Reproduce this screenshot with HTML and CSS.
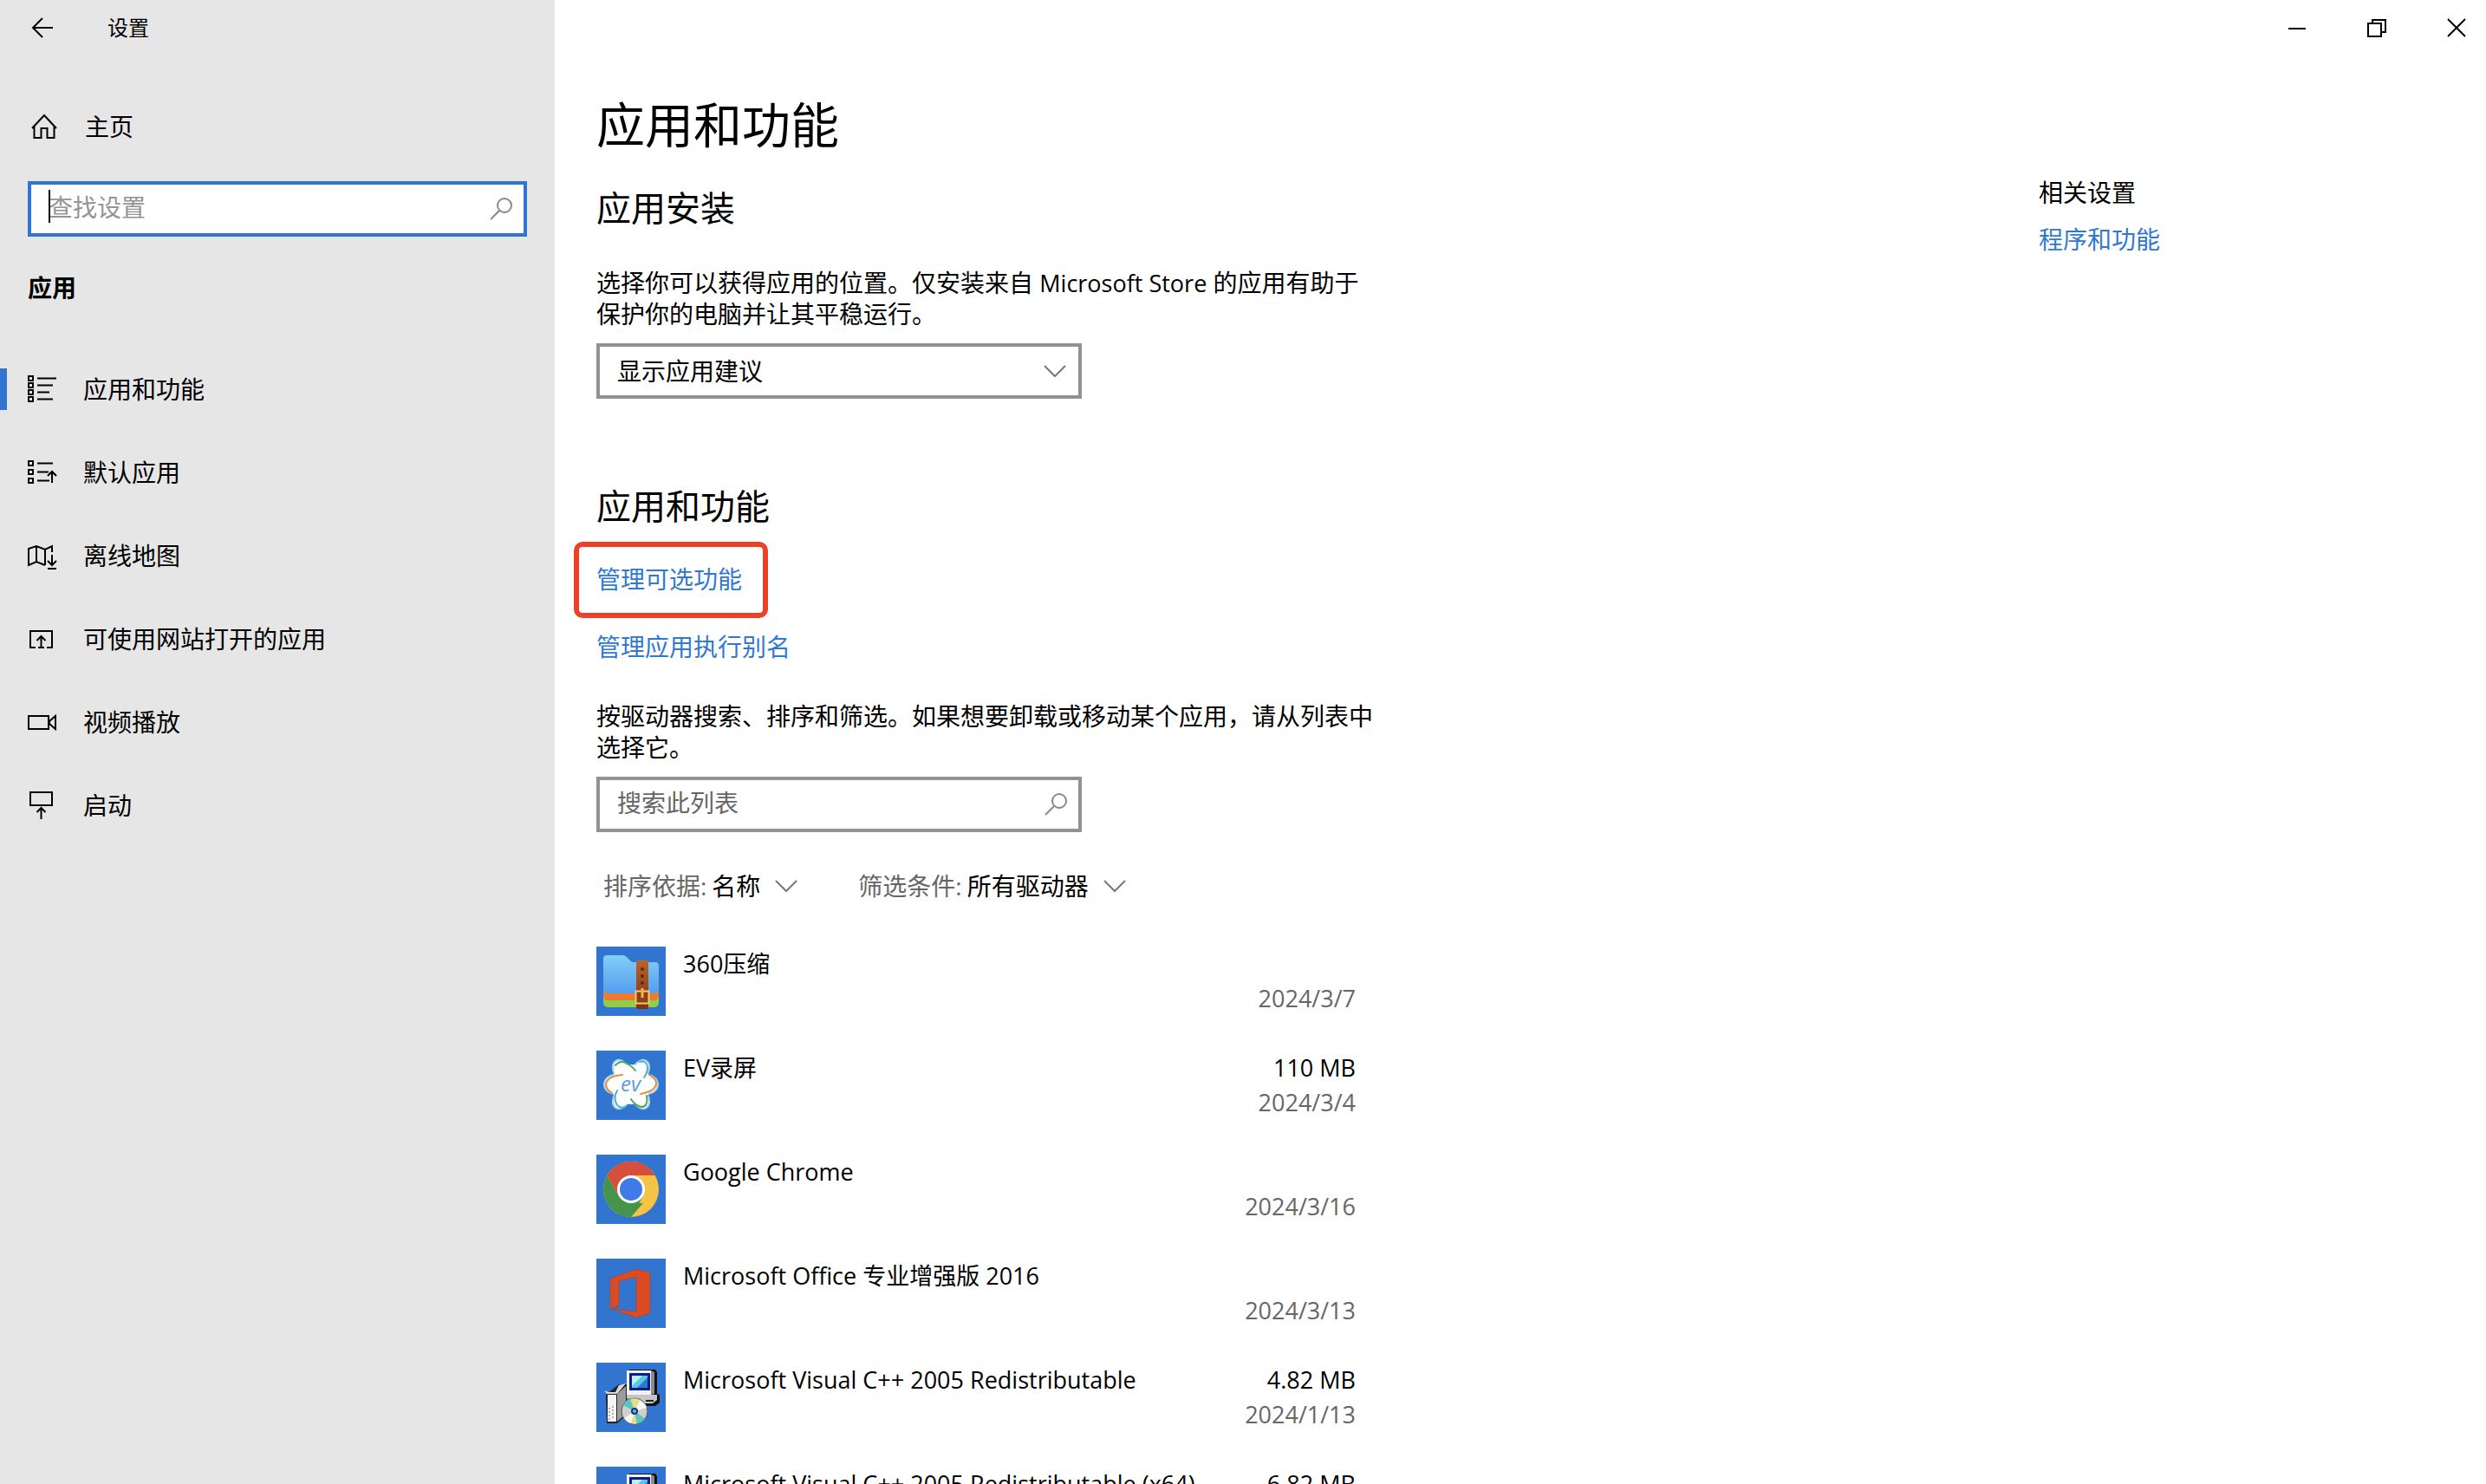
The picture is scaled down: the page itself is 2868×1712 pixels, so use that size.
FILE: index.html
```html
<!DOCTYPE html>
<html lang="zh-CN">
<head>
    <meta charset="UTF-8">
    <meta name="viewport" content="width=device-width, initial-scale=1.0">
    <title>设置</title>
    <link rel="stylesheet" href="styles.css">
</head>
<body>
    <aside class="sidebar">
        <div class="sidebar-top">
            <button class="back-button" type="button" aria-label="返回">
                <svg width="26" height="26" viewBox="0 0 26 26"><path d="M25 13H2M13 2L2 13l11 11"/></svg>
            </button>
            <span class="window-title">设置</span>
        </div>

        <a href="#" class="home-link">
            <svg width="30" height="30" viewBox="0 0 30 30"><path d="M1 17L15 2l14 15M3.500 15v13h8V17h7v11h8V15"/></svg>
            <span>主页</span>
        </a>

        <div class="search-box search-box-focused">
            <input type="text" class="search-input" placeholder="查找设置" aria-label="查找设置">
            <svg class="search-icon" width="28" height="28" viewBox="0 0 28 28"><circle cx="18" cy="10" r="8"/><path d="M12 16L2 26"/></svg>
        </div>

        <h2 class="sidebar-heading">应用</h2>

        <nav class="nav">
            <a href="#" class="nav-item active">
                <svg width="34" height="34" viewBox="0 0 34 34"><path d="M1 2h5v5H1zM1 10h5v5H1zM1 18h5v5H1zM1 26h5v5H1zM11 4.500h22M11 12.500h18M11 20.500h14M11 28.500h18"/></svg>
                <span>应用和功能</span>
            </a>
            <a href="#" class="nav-item">
                <svg width="34" height="34" viewBox="0 0 34 34"><path d="M1 4h5v5H1zM1 14h5v5H1zM1 24h5v5H1zM11 6.500h18M11 16.500h13M11 26.500h14M28 29V16M23 21l5-5 5 5"/></svg>
                <span>默认应用</span>
            </a>
            <a href="#" class="nav-item">
                <svg width="34" height="34" viewBox="0 0 34 34"><path d="M20 28l-10-4-9 4V9l9-3 10 4 8-4v7M10 6v18M20 10v18M28 16v12M23 23l5 5 5-5M23 32h10"/></svg>
                <span>离线地图</span>
            </a>
            <a href="#" class="nav-item">
                <svg width="34" height="34" viewBox="0 0 34 34"><path d="M9 27H3V8h25v19h-6M12 27h7M15.500 27V14M10.500 19l5-5 5 5"/></svg>
                <span>可使用网站打开的应用</span>
            </a>
            <a href="#" class="nav-item">
                <svg width="34" height="34" viewBox="0 0 34 34"><path d="M1 10h23v15H1zM32 10v15l-7-6v-3z"/></svg>
                <span>视频播放</span>
            </a>
            <a href="#" class="nav-item">
                <svg width="34" height="34" viewBox="0 0 34 34"><path d="M3 2h25v15H3zM15.500 33V20M10.500 25l5-5 5 5"/></svg>
                <span>启动</span>
            </a>
        </nav>
    </aside>

    <main class="main">
        <div class="window-controls">
            <button type="button" aria-label="最小化"><svg width="22" height="22" viewBox="0 0 22 22"><path d="M1 12h20"/></svg></button>
            <button type="button" aria-label="还原"><svg width="22" height="22" viewBox="0 0 22 22"><path d="M1 6h15v15H1zM6 6V2h15v14h-5"/></svg></button>
            <button type="button" aria-label="关闭"><svg width="22" height="22" viewBox="0 0 22 22"><path d="M1 1l20 20M21 1L1 21"/></svg></button>
        </div>

        <div class="page">
            <div class="content">
                <h1>应用和功能</h1>

                <section class="install-section">
                    <h2>应用安装</h2>
                    <p class="text"><label for="source">选择你可以获得应用的位置。仅安装来自 <span class="latin">Microsoft Store</span> 的应用有助于保护你的电脑并让其平稳运行。</label></p>
                    <div class="select-box">
                        <select id="source">
                            <option>显示应用建议</option>
                        </select>
                        <svg class="chevron" width="26" height="16" viewBox="0 0 26 16"><path d="M1 2l12 12L25 2"/></svg>
                    </div>
                </section>

                <section>
                    <h2>应用和功能</h2>
                    <a href="#" class="link highlight">管理可选功能</a>
                    <a href="#" class="link">管理应用执行别名</a>
                    <p class="text list-text"><label for="list-search">按驱动器搜索、排序和筛选。如果想要卸载或移动某个应用，请从列表中选择它。</label></p>
                    <div class="search-box list-search">
                        <input type="text" id="list-search" class="search-input" placeholder="搜索此列表">
                        <svg class="search-icon" width="28" height="28" viewBox="0 0 28 28"><circle cx="18" cy="10" r="8"/><path d="M12 16L2 26"/></svg>
                    </div>

                    <div class="filters">
                        <div class="filter">
                            <label for="sort">排序依据:</label>
                            <select id="sort"><option>名称</option></select>
                            <svg class="chevron" width="26" height="16" viewBox="0 0 26 16"><path d="M1 2l12 12L25 2"/></svg>
                        </div>
                        <div class="filter">
                            <label for="drive">筛选条件:</label>
                            <select id="drive"><option>所有驱动器</option></select>
                            <svg class="chevron" width="26" height="16" viewBox="0 0 26 16"><path d="M1 2l12 12L25 2"/></svg>
                        </div>
                    </div>

                    <ul class="app-list">
                        <li class="app">
                            <svg class="app-icon" viewBox="0 0 80 80">
                                <defs>
                                    <linearGradient id="folder" x1="0" y1="0" x2="0" y2="1"><stop offset="0" stop-color="#82cff6"/><stop offset="1" stop-color="#559df0"/></linearGradient>
                                    <linearGradient id="strap" x1="0" y1="0" x2="0" y2="1"><stop offset="0" stop-color="#b9642a"/><stop offset="1" stop-color="#7d3212"/></linearGradient>
                                </defs>
                                <path fill="#8fce46" d="M8 56h64v8q0 6-6 6H14q-6 0-6-6z"/>
                                <path fill="#ee7a30" d="M8 48h64v8q0 6-6 6H14q-6 0-6-6z"/>
                                <path fill="url(#folder)" d="M8 14q0-4 4-4h18q3 0 5 2l6 6h27q4 0 4 4v26q0 6-6 6H14q-6 0-6-6z"/>
                                <rect x="46" y="16" width="14" height="56" rx="2" fill="url(#strap)"/>
                                <g fill="#5e2a10"><circle cx="53" cy="26" r="2"/><circle cx="53" cy="34" r="2"/><circle cx="53" cy="42" r="2"/></g>
                                <rect x="45.500" y="51.500" width="15" height="14" fill="#8a4216" stroke="#f7c873" stroke-width="2"/>
                                <path d="M53 48v11" stroke="#f2b24e" stroke-width="3"/>
                            </svg>
                            <span class="app-name">360压缩</span>
                            <span class="app-meta"><span class="app-size"></span><span class="app-date">2024/3/7</span></span>
                        </li>
                        <li class="app">
                            <svg class="app-icon" viewBox="0 0 80 80">
                                <g fill="#fff" stroke="#a9d4ef" stroke-width="2">
                                    <ellipse cx="29" cy="23" rx="9" ry="13" transform="rotate(-30 29 23)"/>
                                    <ellipse cx="51" cy="23" rx="9" ry="13" transform="rotate(30 51 23)"/>
                                    <ellipse cx="58" cy="39" rx="13" ry="11"/>
                                    <ellipse cx="51" cy="55" rx="9" ry="13" transform="rotate(-30 51 55)"/>
                                    <ellipse cx="29" cy="55" rx="9" ry="13" transform="rotate(30 29 55)"/>
                                    <ellipse cx="22" cy="39" rx="13" ry="11"/>
                                </g>
                                <circle cx="40" cy="39" r="23" fill="#fff"/>
                                <g fill="none" stroke-width="2" stroke-linecap="round">
                                    <path stroke="#4aa95c" d="M22 17q6-7 14-2 6 4 9 8"/>
                                    <path stroke="#4fb3c4" d="M50 13q8-2 9 6 0 7-4 12"/>
                                    <path stroke="#e58a3c" d="M61 28q9 5 8 11-2 8-18 11"/>
                                    <path stroke="#4aa95c" d="M58 52q2 13-6 13-7-1-12-9"/>
                                    <path stroke="#4fb3c4" d="M24 46q-5 9 0 17 4 4 9 2"/>
                                    <path stroke="#e58a3c" d="M30 28q-16 1-19 10 0 7 7 11"/>
                                </g>
                                <text class="ev-mark" x="28" y="47">ev</text>
                            </svg>
                            <span class="app-name">EV录屏</span>
                            <span class="app-meta"><span class="app-size">110 MB</span><span class="app-date">2024/3/4</span></span>
                        </li>
                        <li class="app">
                            <svg class="app-icon" viewBox="0 0 80 80">
                                <circle cx="40" cy="40" r="32" fill="#f6c445"/>
                                <path fill="#46944a" d="M12.300 24L26.100 48 40 56h13.900L40 72A32 32 0 0 1 12.300 24z"/>
                                <path fill="#46944a" d="M26.100 48L53.900 48 40 72z"/>
                                <path fill="#d54f3d" d="M12.300 24A32 32 0 0 1 67.700 24H40L26.100 48z"/>
                                <circle cx="40" cy="40" r="16" fill="#fff"/>
                                <circle cx="40" cy="40" r="13" fill="#3f7ae6"/>
                            </svg>
                            <span class="app-name">Google Chrome</span>
                            <span class="app-meta"><span class="app-size"></span><span class="app-date">2024/3/16</span></span>
                        </li>
                        <li class="app">
                            <svg class="app-icon" viewBox="0 0 80 80">
                                <path fill="#dc4b24" stroke="#8f5050" stroke-width="1" fill-rule="evenodd" d="M16 23l30-11 16 4v47l-16 5-29-10 29 3V21l-20 5v28l-10 4z"/>
                            </svg>
                            <span class="app-name">Microsoft Office 专业增强版 2016</span>
                            <span class="app-meta"><span class="app-size"></span><span class="app-date">2024/3/13</span></span>
                        </li>
                        <li class="app">
                            <svg class="app-icon" viewBox="0 0 80 80">
                                <g id="installer">
                                    <path fill="#111" d="M38 8h30l2 3v25l3 1v9l-5 4H52v-8H36V10z"/>
                                    <path fill="#c6c6c6" d="M35 37h35v6l-5 4H50l-15-6z"/>
                                    <path fill="#f2f2f2" d="M35 9h28v28H35z"/>
                                    <path fill="#8b8b8b" d="M63 9l4 2v25l-4 1z"/>
                                    <path fill="#0d1c8c" d="M38 12h24v20H38z"/>
                                    <path fill="#58c7e6" d="M41 15h18v14H41z"/>
                                    <path fill="#b9f2f7" d="M41 15h12L41 27z"/>
                                    <path fill="#2d7ccc" d="M59 17v12H47z"/>
                                    <path d="M57 44h9" stroke="#222" stroke-width="2"/>
                                    <path fill="#222" d="M11 37l15-12h9v35L24 70H12z"/>
                                    <path fill="#9b9b9b" d="M24 36l10-9v32L24 68z"/>
                                    <path fill="#d9d9d9" d="M9 32l5 2h8l4-8 8-2-10 12H12z"/>
                                    <path fill="#f4f4f4" d="M13 37h10v31H13z"/>
                                    <path stroke="#b0b0b0" stroke-width="2" stroke-dasharray="2 2" d="M15 52v14M19 50v16"/>
                                    <circle cx="44" cy="56" r="15" fill="#cfcfcf" stroke="#555" stroke-width="1"/>
                                    <path fill="#e9dd83" d="M44 56l-4-14.500q5-1 9 1zM44 56l-4 14q3 1 6 1z"/>
                                    <path fill="#58c8bb" d="M44 56L31 49q3-6 8-7zM44 56l3 14.500q6-1 9-6z"/>
                                    <path fill="#f6f6f6" d="M44 56l6-13q6 3 8 9zM44 56l-12 8q3 5 8 6z"/>
                                    <circle cx="44" cy="56" r="4" fill="#123a72"/>
                                    <circle cx="44" cy="56" r="2" fill="#6db6f2"/>
                                </g>
                            </svg>
                            <span class="app-name">Microsoft Visual C++ 2005 Redistributable</span>
                            <span class="app-meta"><span class="app-size">4.82 MB</span><span class="app-date">2024/1/13</span></span>
                        </li>
                        <li class="app">
                            <svg class="app-icon" viewBox="0 0 80 80"><use href="#installer"/></svg>
                            <span class="app-name">Microsoft Visual C++ 2005 Redistributable (x64)</span>
                            <span class="app-meta"><span class="app-size">6.82 MB</span></span>
                        </li>
                    </ul>
                </section>
            </div>

            <div class="related">
                <h3>相关设置</h3>
                <a href="#" class="link">程序和功能</a>
            </div>
        </div>
    </main>
</body>
</html>
```
FILE: styles.css
```css
* {
    box-sizing: border-box;
}

body {
    font-family: "Open Sans", "Noto Sans CJK SC", sans-serif;
    font-size: 28px;
    line-height: 36px;
    margin: 0;
    height: 100vh;
    display: flex;
    overflow: hidden;
    background: #fff;
    color: #000;
}

h1,
h2,
h3,
p,
ul {
    margin: 0;
    padding: 0;
    font-weight: 400;
}

a {
    color: inherit;
    text-decoration: none;
}

button,
input,
select {
    font: inherit;
    color: inherit;
    border: none;
    border-radius: 0;
    background: none;
    padding: 0;
    margin: 0;
}

select {
    appearance: none;
    cursor: pointer;
}

svg {
    display: block;
    flex-shrink: 0;
    fill: none;
    stroke: #000;
    stroke-width: 2;
}

/* Sidebar */
.sidebar {
    width: 640px;
    flex-shrink: 0;
    background: #e6e6e6;
}

.sidebar-top {
    display: flex;
    align-items: center;
    height: 64px;
    padding-left: 36px;
    gap: 62px;
}

.window-title {
    font-size: 24px;
}

.home-link {
    display: flex;
    align-items: center;
    gap: 32px;
    height: 64px;
    margin-top: 50px;
    padding-left: 36px;
}

.search-box {
    display: flex;
    align-items: center;
    position: relative;
    height: 64px;
    border: 4px solid #929292;
    background: #fff;
    padding: 0 12px 0 20px;
}

.search-box-focused {
    margin: 31px 32px 0;
    border-color: #3275d1;
}

/* Text cursor */
.search-box-focused::before {
    content: "";
    position: absolute;
    left: 20px;
    top: 6px;
    width: 2px;
    height: 38px;
    background: #000;
}

.search-input {
    flex: 1;
    min-width: 0;
    height: 56px;
    padding-bottom: 4px;
    outline: none;
}

.search-input::placeholder {
    color: #666;
    opacity: 1;
}

.search-box-focused .search-input::placeholder {
    color: #949494;
}

.search-icon {
    stroke: #888;
}

.sidebar-heading {
    margin: 41px 32px 0;
    font-size: 28px;
    font-weight: 700;
}

.nav {
    margin-top: 51px;
}

.nav-item {
    display: flex;
    align-items: center;
    gap: 30px;
    height: 96px;
    padding-left: 32px;
}

.nav-item.active {
    background: linear-gradient(#3275d1, #3275d1) left center / 8px 48px no-repeat;
}

/* Main area */
.main {
    flex: 1;
    min-width: 0;
}

.window-controls {
    display: flex;
    justify-content: flex-end;
    gap: 24px;
    height: 64px;
}

.window-controls button {
    display: flex;
    align-items: center;
    justify-content: center;
    width: 68px;
}

.page {
    display: flex;
    justify-content: space-between;
    padding-left: 48px;
}

.content {
    width: 896px;
    padding-top: 43px;
}

.content h1 {
    font-size: 56px;
    line-height: 72px;
}

.content h2 {
    font-size: 40px;
    line-height: 52px;
}

.install-section {
    padding: 35px 0 98px;
}

.text {
    margin-top: 42px;
}

.latin {
    font-size: 27px;
    line-height: 28px;
}

.select-box,
.list-search {
    width: 560px;
    margin-top: 16px;
}

.select-box {
    position: relative;
}

.select-box select {
    width: 100%;
    height: 64px;
    border: 4px solid #929292;
    padding: 0 60px 0 20px;
}

.select-box .chevron {
    position: absolute;
    right: 18px;
    top: 24px;
    pointer-events: none;
}

.chevron {
    stroke: #777;
}

.link {
    display: block;
    width: fit-content;
    color: #2f78d6;
}

.highlight {
    margin: 15px 0 15px -26px;
    padding: 19px 24px 21px 20px;
    border: 6px solid #ec4127;
    border-radius: 10px;
}

.list-text {
    margin-top: 44px;
}

.filters {
    display: flex;
    gap: 70px;
    margin-top: 44px;
    padding-left: 8px;
}

.filter {
    display: flex;
    align-items: center;
    gap: 6px;
    color: #666;
}

.filter select {
    color: #000;
}

.filter .chevron {
    margin-left: 10px;
}

/* Installed apps */
.app-list {
    list-style: none;
    margin-top: 52px;
}

.app {
    display: flex;
    height: 80px;
    margin-bottom: 40px;
    padding-right: 20px;
    font-size: 27px;
    line-height: 40px;
}

.app-icon {
    width: 80px;
    height: 80px;
    margin-right: 20px;
    background: #3275d1;
    stroke: none;
}

.app-name {
    flex: 1;
    white-space: nowrap;
}

.app-meta {
    text-align: right;
}

.app-size,
.app-date {
    display: block;
    height: 40px;
}

.app-date {
    color: #666;
}

.ev-mark {
    font-size: 24px;
    font-style: italic;
    fill: #5b9be6;
}

.related {
    width: 516px;
    padding-top: 140px;
}

.related h3 {
    font-size: 28px;
    margin-bottom: 18px;
}
```
